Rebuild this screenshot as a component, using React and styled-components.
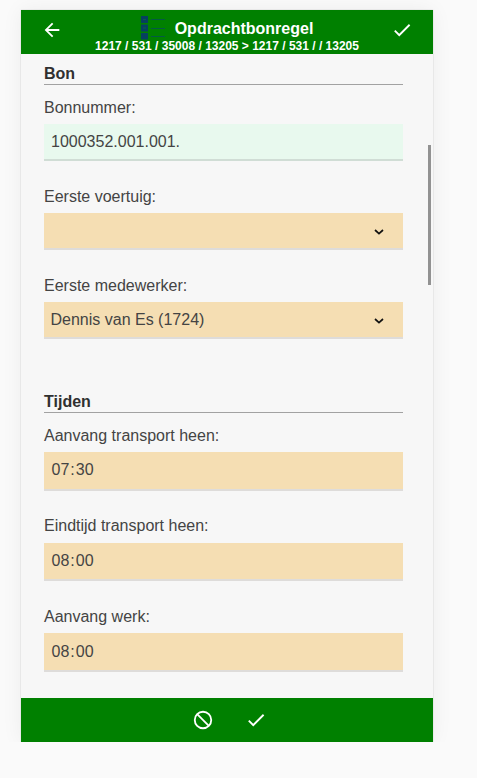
import React from 'react'
import styled, { createGlobalStyle } from 'styled-components'

const bonFields = [
  { label: 'Bonnummer:', value: '1000352.001.001.', type: 'text' },
  { label: 'Eerste voertuig:', value: '', type: 'select' },
  { label: 'Eerste medewerker:', value: 'Dennis van Es (1724)', type: 'select' },
]

const tijdFields = [
  { label: 'Aanvang transport heen:', value: '07:30', type: 'time' },
  { label: 'Eindtijd transport heen:', value: '08:00', type: 'time' },
  { label: 'Aanvang werk:', value: '08:00', type: 'time' },
]

const BackIcon = () => (
  <Icon viewBox="0 0 24 24">
    <path d="M20 11H7.83l5.59-5.59L12 4l-8 8 8 8 1.41-1.41L7.83 13H20v-2z" />
  </Icon>
)

const CheckIcon = () => (
  <Icon viewBox="0 0 24 24">
    <path d="M9 16.17L4.83 12l-1.42 1.41L9 19 21 7l-1.41-1.41z" />
  </Icon>
)

const BlockIcon = () => (
  <StrokeIcon viewBox="0 0 24 24">
    <circle cx="12" cy="12" r="9" />
    <path d="M5.640 5.640l12.720 12.720" />
  </StrokeIcon>
)

const ListIcon = () => (
  <ListSvg viewBox="0 0 24 24">
    <path fill="#06405f" d="M0 0h7v7H0zM0 8.5h7v7H0zM0 17h7v6.500H0z" />
    <path stroke="#0b5a50" strokeWidth="1" d="M2 3.500h3M2 12h3" />
    <path stroke="#045a44" strokeWidth="1" d="M10 3.500h14M10 12.500h14M10 20.500h14" />
  </ListSvg>
)

const Field = ({ label, value, type }) => {
  const [hours, minutes] = value.split(':')
  return (
    <div>
      <Label $type={type}>{label}</Label>
      <Box $type={type}>
        {type === 'time' ? (
          <Time>
            <span>{hours}</span>:<span>{minutes}</span>
          </Time>
        ) : (
          <span>{value}</span>
        )}
        {type === 'select' && (
          <Chevron viewBox="0 0 10 6">
            <path d="M1 1l4 3.600 4-3.600" />
          </Chevron>
        )}
      </Box>
    </div>
  )
}

const App = () => {
  return (
    <>
      <GlobalStyle />
      <Panel>
        <Header>
          <IconButton aria-label="Terug"><BackIcon /></IconButton>
          <Heading>
            <TitleRow>
              <ListIcon />
              <Title>Opdrachtbonregel</Title>
            </TitleRow>
            <SubTitle>{'1217 / 531 / 35008 / 13205 > 1217 / 531 / / 13205'}</SubTitle>
          </Heading>
          <IconButton aria-label="Opslaan"><CheckIcon /></IconButton>
        </Header>
        <Content>
          <Section>
            <SectionTitle>Bon</SectionTitle>
            <FieldList $gap="26px">
              {bonFields.map((f) => <Field key={f.label} {...f} />)}
            </FieldList>
          </Section>
          <Section>
            <SectionTitle>Tijden</SectionTitle>
            <FieldList $gap="25.6px">
              {tijdFields.map((f) => <Field key={f.label} {...f} />)}
            </FieldList>
          </Section>
          <ScrollThumb />
        </Content>
        <Footer>
          <IconButton aria-label="Annuleren"><BlockIcon /></IconButton>
          <IconButton aria-label="Bevestigen"><CheckIcon /></IconButton>
        </Footer>
      </Panel>
    </>
  )
}

const GlobalStyle = createGlobalStyle`
  *{
    box-sizing: border-box;
  }
  body{
    margin: 0;
    background: #fafafa;
    color: #444;
    font-family: "Liberation Sans", Arial, sans-serif;
    font-size: 16px;
    line-height: 20px;
  }
`
const Panel = styled.main`
  display: flex;
  flex-direction: column;
  width: 412px;
  height: 732px;
  margin: 10px 0 0 21px;
  background: #f7f7f7;
  box-shadow: 0 0 1px rgba(0, 0, 0, 0.25), 0 0 20px rgba(0, 0, 0, 0.06);
`
const Header = styled.header`
  display: flex;
  justify-content: space-between;
  height: 44px;
  padding: 0 20px;
  background: #008000;
  color: #fff;
`
const IconButton = styled.button`
  display: flex;
  align-items: center;
  width: 22px;
  height: 40px;
  padding: 0;
  border: none;
  background: none;
  color: #fff;
  cursor: pointer;
`
const Icon = styled.svg`
  width: 22px;
  height: 22px;
  fill: currentColor;
`
const StrokeIcon = styled(Icon)`
  fill: none;
  stroke: currentColor;
  stroke-width: 2;
`
const Heading = styled.div`
  display: flex;
  flex-direction: column;
  align-items: center;
  padding-top: 6px;
  white-space: nowrap;
`
const TitleRow = styled.div`
  display: flex;
  gap: 10px;
  height: 23px;
`
const ListSvg = styled.svg`
  width: 24px;
  height: 24px;
`
const Title = styled.h1`
  margin: 3px 0 0;
  font-size: 16px;
  line-height: 20px;
`
const SubTitle = styled.div`
  font-size: 12px;
  font-weight: bold;
  line-height: 14px;
`
const Content = styled.div`
  position: relative;
  flex: 1;
  min-height: 0;
  padding: 10px 30px 0 23px;
`
const Section = styled.section`
  & + &{
    margin-top: 52.8px;
  }
`
const SectionTitle = styled.h2`
  margin: 0 0 13px;
  border-bottom: 1px solid #a2a2a2;
  color: #303030;
  font-size: 16px;
  line-height: 20px;
`
const FieldList = styled.div`
  display: flex;
  flex-direction: column;
  gap: ${(p) => p.$gap};
`
const Label = styled.div`
  margin-bottom: ${(p) => (p.$type === 'time' ? '6.3px' : '6px')};
`
const Box = styled.div`
  display: flex;
  align-items: center;
  justify-content: space-between;
  height: ${(p) => (p.$type === 'time' ? '38.7px' : '37px')};
  padding: 0 19px 0 ${(p) => (p.$type === 'text' ? '7px' : '6.5px')};
  border-bottom: 2px solid ${(p) => (p.$type === 'text' ? '#d0ddd5' : '#dedcda')};
  background: ${(p) => (p.$type === 'text' ? '#e8f9ee' : '#f5deb3')};
`
const Time = styled.span`
  span{
    padding: 0 1px;
  }
`
const Chevron = styled.svg`
  width: 10px;
  height: 6px;
  margin-top: 3px;
  fill: none;
  stroke: #111;
  stroke-width: 1.7;
`
const ScrollThumb = styled.div`
  position: absolute;
  top: 91px;
  right: 2px;
  width: 3px;
  height: 140px;
  background: #929292;
`
const Footer = styled.footer`
  display: flex;
  align-items: center;
  justify-content: center;
  gap: 31px;
  height: 44px;
  padding-left: 4px;
  background: #008000;
`
export default App
